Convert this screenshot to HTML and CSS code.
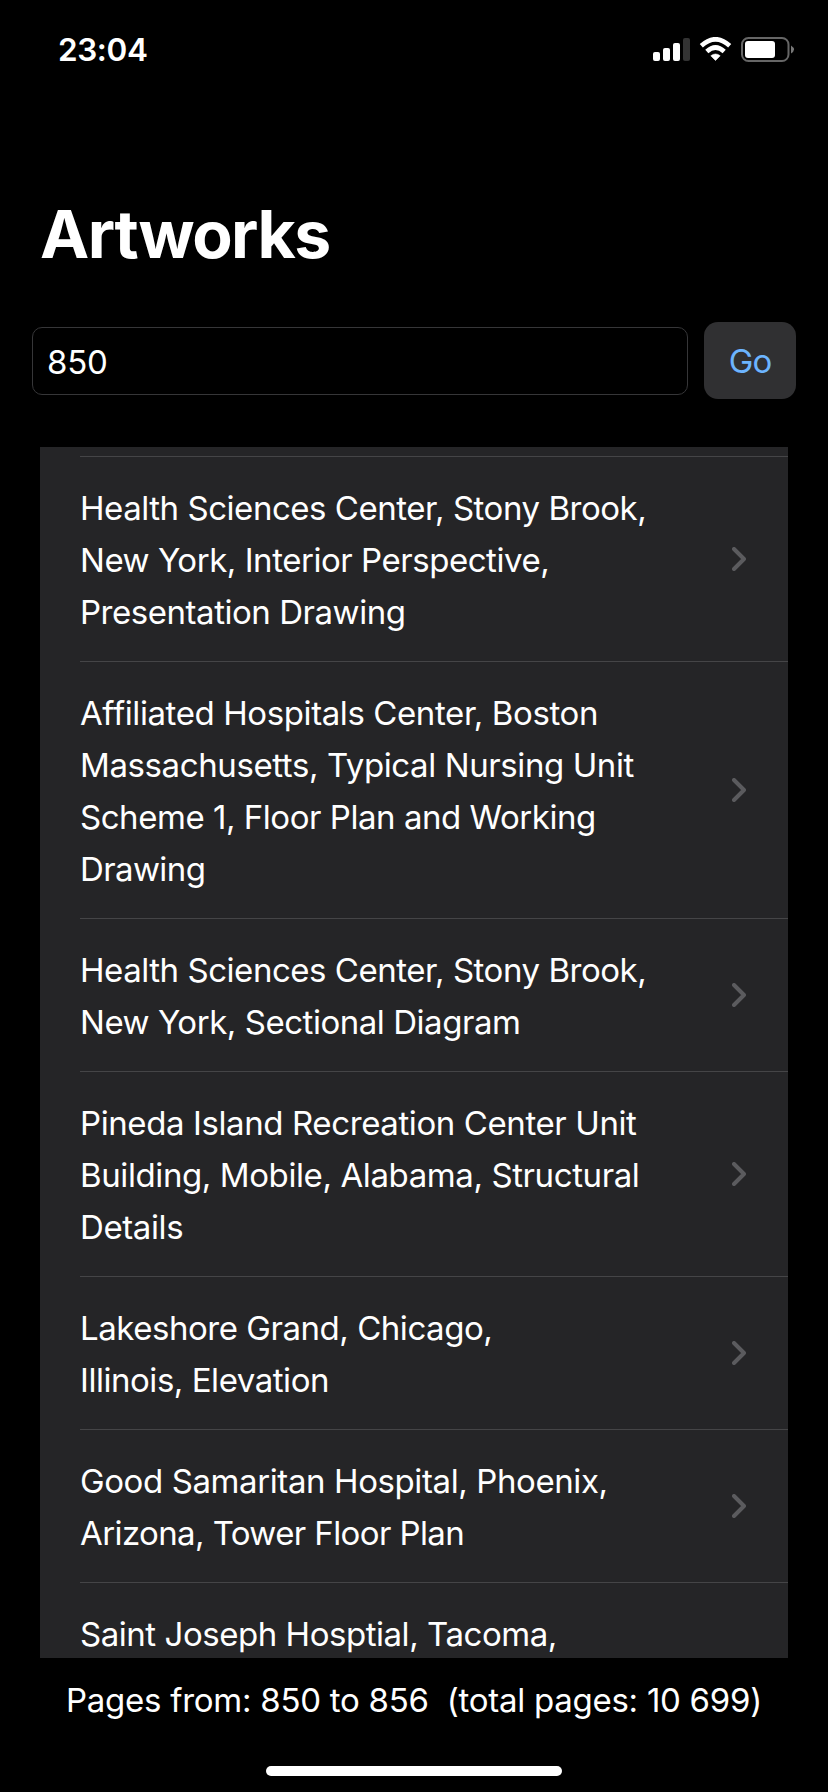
FILE: index.html
```html
<!DOCTYPE html>
<html lang="en">
<head>
<meta charset="utf-8">
<title>Artworks</title>
<link rel="stylesheet" href="styles.css">
</head>
<body>
<div class="screen">
  <header class="status">
    <span class="time">23:04</span>
    <svg class="indicators" width="142" height="26" viewBox="0 0 142 26">
      <g fill="#fff">
        <rect x="0" y="15" width="7" height="9" rx="2"/>
        <rect x="10" y="11" width="7" height="13" rx="2"/>
        <rect x="20" y="6" width="7" height="18" rx="2"/>
        <rect x="30" y="1" width="7" height="23" rx="2" fill="#333"/>
        <path d="M62.500 23.500L57.800 18.800Q62.500 15.200 67.200 18.800Z" stroke="#fff" stroke-width=".6" stroke-linejoin="round"/>
        <rect x="92" y="4" width="30" height="17" rx="3"/>
      </g>
      <g fill="none" stroke="#fff" stroke-width="4.600">
        <path d="M48.300 8.800Q62.500 -4.200 76.700 8.800"/>
        <path d="M53.800 14.500Q62.500 6.500 71.200 14.500"/>
      </g>
      <rect x="89" y="1" width="46.500" height="23" rx="6.500" fill="none" stroke="#666" stroke-width="2"/>
      <path d="M138 8.500Q144 12.500 138 16.500Z" fill="#777"/>
    </svg>
  </header>
  <h1 class="title">Artworks</h1>
  <form class="search">
    <input class="page-input" type="text" value="850" aria-label="Page">
    <button class="go" type="button">Go</button>
  </form>
  <main class="list">
    <article class="row"><p class="name">Health Sciences Center, Stony Brook,<br>New York, Interior Perspective,<br>Presentation Drawing</p><svg class="chevron" viewBox="0 0 14 24"><path d="M2 2L12 12L2 22"/></svg></article>
    <article class="row"><p class="name"><span class="loose">Affiliated Hospitals Center, Boston</span><br><span class="loose">Massachusetts, Typical Nursing Unit</span><br>Scheme 1, Floor Plan and Working<br><span class="tight">Drawing</span></p><svg class="chevron" viewBox="0 0 14 24"><path d="M2 2L12 12L2 22"/></svg></article>
    <article class="row"><p class="name">Health Sciences Center, Stony Brook,<br>New York, Sectional Diagram</p><svg class="chevron" viewBox="0 0 14 24"><path d="M2 2L12 12L2 22"/></svg></article>
    <article class="row"><p class="name"><span class="loose">Pineda Island Recreation Center Unit<br>Building, Mobile, Alabama, Structural<br>Details</span></p><svg class="chevron" viewBox="0 0 14 24"><path d="M2 2L12 12L2 22"/></svg></article>
    <article class="row"><p class="name">Lakeshore Grand, Chicago,<br>Illinois, Elevation</p><svg class="chevron" viewBox="0 0 14 24"><path d="M2 2L12 12L2 22"/></svg></article>
    <article class="row"><p class="name"><span class="loose">Good Samaritan Hospital, Phoenix,</span><br><span class="tight">Arizona, Tower Floor Plan</span></p><svg class="chevron" viewBox="0 0 14 24"><path d="M2 2L12 12L2 22"/></svg></article>
    <article class="row"><p class="name">Saint Joseph Hosptial, Tacoma,</p></article>
  </main>
  <footer class="footer">
    <p class="pages">Pages from: 850 to 856&nbsp; (total pages: 10 699)</p>
    <div class="home"></div>
  </footer>
</div>
</body>
</html>
```
FILE: styles.css
```css
* { box-sizing: border-box; margin: 0; }
body { background: #000; color: #fff; font-family: Inter, "Liberation Sans", sans-serif; font-size: 33px; }
.screen { display: flex; flex-direction: column; height: 1792px; overflow: hidden; }
.status { height: 100px; padding: 0 33px 0 58px; display: flex; align-items: center; justify-content: space-between; }
.time { font-size: 31.5px; font-weight: 600; line-height: 40px; letter-spacing: -.4px; }
.indicators { display: block; }
.title { height: 222px; padding: 94px 0 0 40px; font-size: 66px; line-height: 80px; font-weight: 700; letter-spacing: -1.5px; }
.search { height: 125px; padding: 0 32px; display: flex; align-items: flex-start; gap: 16px; }
.page-input { flex: 1; min-width: 0; height: 68px; margin-top: 5px; padding: 2px 14px 0; border: 1px solid #363638; border-radius: 10px; background: #000; color: #fff; font: inherit; letter-spacing: -.2px; outline: 0; }
.go { width: 92px; height: 77px; padding: 0; border: 0; border-radius: 14px; background: #303032; color: #6cb4ff; font: inherit; letter-spacing: -1px; }
.list { height: 1211px; margin: 0 40px; padding: 9px 0 0 40px; background: #252527; overflow: hidden; }
.row { display: flex; align-items: center; justify-content: space-between; padding: 24px 42px 24px 0; border-top: 1px solid #454547; }
.name { padding-top: 1px; margin-bottom: -1px; line-height: 52px; white-space: nowrap; letter-spacing: -.46px; }
.loose { letter-spacing: -.4px; }
.tight { letter-spacing: -.6px; }
.chevron { width: 14px; height: 24px; fill: none; stroke: #5b5b5e; stroke-width: 4; stroke-linecap: round; stroke-linejoin: round; }
.footer { flex: 1; display: flex; flex-direction: column; align-items: center; justify-content: space-between; padding: 16px 0; }
.pages { line-height: 52px; white-space: nowrap; letter-spacing: -.26px; }
.home { width: 296px; height: 10px; border-radius: 5px; background: #fff; }
```
